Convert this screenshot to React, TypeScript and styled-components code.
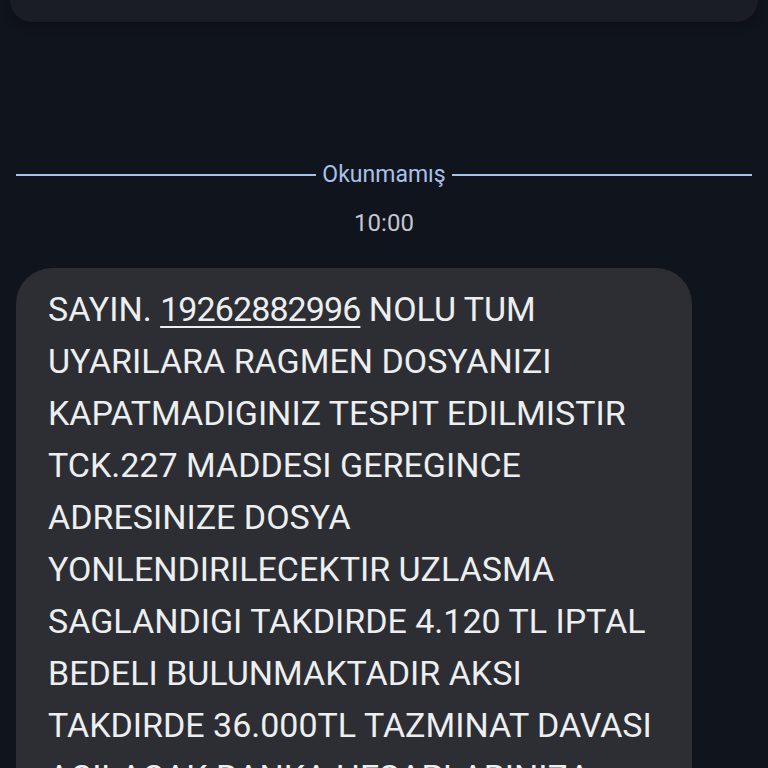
import styled, { createGlobalStyle } from 'styled-components'

const GlobalStyle = createGlobalStyle`
  html, body {
    margin: 0;
    padding: 0;
    background: #10141c;
    overflow: hidden;
  }
  body {
    font-family: Roboto, "Noto Sans", sans-serif;
  }
`

const Screen = styled.main`
  width: 768px;
  height: 768px;
  overflow: hidden;
  background: #10141c;
  display: flex;
  flex-direction: column;

  & > * {
    flex-shrink: 0;
  }
`

const PrevCard = styled.div`
  margin: 0 10px;
  height: 22px;
  border-radius: 0 0 22px 22px;
  background: #1a1d25;
  box-shadow: 0 4px 10px rgba(0, 0, 0, 0.25);
`

const Divider = styled.div`
  margin: 140px 16px 0;
  display: flex;
  align-items: center;
  gap: 6px;
`

const Rule = styled.div`
  flex: 1;
  height: 2px;
  background: #a9c1e8;
`

const DividerLabel = styled.span`
  color: #a9c1e8;
  font-size: 23px;
  line-height: 26px;
`

const Time = styled.div`
  margin-top: 20px;
  text-align: center;
  color: #c4c7cd;
  font-size: 24px;
  line-height: 30px;
`

const Bubble = styled.div`
  margin: 30px 0 0 16px;
  width: 676px;
  box-sizing: border-box;
  padding: 15px 32px 40px;
  border-radius: 36px;
  background: #2d2e33;
  color: #eceef0;
  font-size: 34px;
  line-height: 52px;
`

const Line = styled.div`
  white-space: nowrap;
`

const Number = styled.span`
  letter-spacing: -0.9px;
  text-decoration: underline;
  text-decoration-thickness: 2px;
  text-underline-offset: 5px;
`

const lines = [
  'UYARILARA RAGMEN DOSYANIZI',
  'KAPATMADIGINIZ TESPIT EDILMISTIR',
  'TCK.227 MADDESI GEREGINCE',
  'ADRESINIZE DOSYA',
  'YONLENDIRILECEKTIR UZLASMA',
  'SAGLANDIGI TAKDIRDE 4.120 TL IPTAL',
  'BEDELI BULUNMAKTADIR AKSI',
  'TAKDIRDE 36.000TL TAZMINAT DAVASI',
  'ACILACAK BANKA HESAPLARINIZA',
]

const App = () => (
  <>
    <GlobalStyle />
    <Screen>
      <PrevCard />
      <Divider>
        <Rule />
        <DividerLabel>Okunmamış</DividerLabel>
        <Rule />
      </Divider>
      <Time>10:00</Time>
      <Bubble>
        <Line>
          SAYIN. <Number>19262882996</Number> NOLU TUM
        </Line>
        {lines.map((l) => (
          <Line key={l}>{l}</Line>
        ))}
      </Bubble>
    </Screen>
  </>
)

export default App
